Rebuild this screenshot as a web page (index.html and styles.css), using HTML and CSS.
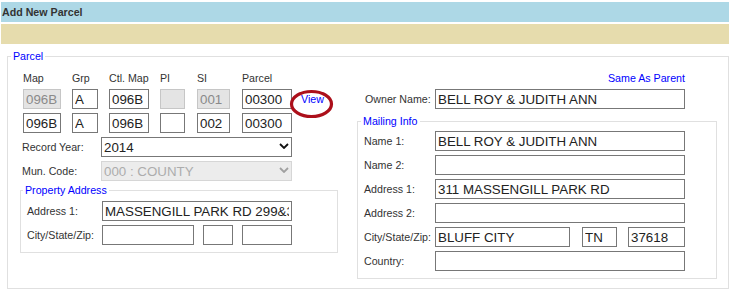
FILE: index.html
```html
<!DOCTYPE html>
<html>
  <head>
    <title>Add New Parcel</title>
    <link rel="stylesheet" href="styles.css">
  </head>
  <body>
    <div class="title-bar">Add New Parcel</div>
    <div class="tool-bar"></div>

    <fieldset class="parcel-box">
      <legend>Parcel</legend>
      <div class="columns">

        <div class="left-col">
          <div class="id-grid">
            <span>Map</span>
            <span>Grp</span>
            <span>Ctl. Map</span>
            <span>PI</span>
            <span>SI</span>
            <span>Parcel</span>
            <span></span>

            <input class="box w-map" type="text" value="096B" disabled>
            <input class="box w-grp" type="text" value="A">
            <input class="box w-ctl" type="text" value="096B">
            <input class="box w-pi" type="text" value="" disabled>
            <input class="box w-si" type="text" value="001" disabled>
            <input class="box w-parcel" type="text" value="00300">
            <span class="view-cell">
              <a class="view-link" href="#">View</a>
              <svg class="ring" width="45" height="30" viewBox="0 0 45 30">
                <ellipse cx="22.5" cy="15" rx="20" ry="12.5" fill="none" stroke="#ac0f1a" stroke-width="3.2"/>
              </svg>
            </span>

            <input class="box w-map" type="text" value="096B">
            <input class="box w-grp" type="text" value="A">
            <input class="box w-ctl" type="text" value="096B">
            <input class="box w-pi" type="text" value="">
            <input class="box w-si" type="text" value="002">
            <input class="box w-parcel" type="text" value="00300">
            <span></span>
          </div>

          <div class="field-row">
            <label class="lbl" for="year">Record Year:</label>
            <span class="select-wrap">
              <select class="box sel" id="year"><option>2014</option></select>
              <svg class="chev" width="10" height="6" viewBox="0 0 10 6">
                <polyline points="1,1 5,5 9,1" fill="none" stroke="#111" stroke-width="1.8"/>
              </svg>
            </span>
          </div>
          <div class="field-row">
            <label class="lbl" for="mun">Mun. Code:</label>
            <span class="select-wrap">
              <select class="box sel" id="mun" disabled><option>000 : COUNTY</option></select>
              <svg class="chev" width="10" height="6" viewBox="0 0 10 6">
                <polyline points="1,1 5,5 9,1" fill="none" stroke="#a0a0a0" stroke-width="1.8"/>
              </svg>
            </span>
          </div>

          <fieldset class="prop-box">
            <legend>Property Address</legend>
            <div class="field-row">
              <label class="lbl">Address 1:</label>
              <input class="box w-long" type="text" value="MASSENGILL PARK RD 299&amp;301">
            </div>
            <div class="field-row">
              <label class="lbl">City/State/Zip:</label>
              <input class="box w-city" type="text" value="">
              <input class="box w-state" type="text" value="">
              <input class="box w-zip" type="text" value="">
            </div>
          </fieldset>
        </div>

        <div class="right-col">
          <div class="same-row"><a href="#">Same As Parent</a></div>
          <div class="field-row owner-row">
            <label class="lbl">Owner Name:</label>
            <input class="box w-wide" type="text" value="BELL ROY &amp; JUDITH ANN">
          </div>

          <fieldset class="mail-box">
            <legend>Mailing Info</legend>
            <div class="field-row first">
              <label class="lbl">Name 1:</label>
              <input class="box w-wide" type="text" value="BELL ROY &amp; JUDITH ANN">
            </div>
            <div class="field-row">
              <label class="lbl">Name 2:</label>
              <input class="box w-wide" type="text" value="">
            </div>
            <div class="field-row">
              <label class="lbl">Address 1:</label>
              <input class="box w-wide" type="text" value="311 MASSENGILL PARK RD">
            </div>
            <div class="field-row">
              <label class="lbl">Address 2:</label>
              <input class="box w-wide" type="text" value="">
            </div>
            <div class="field-row">
              <label class="lbl">City/State/Zip:</label>
              <input class="box w-mcity" type="text" value="BLUFF CITY">
              <input class="box w-mstate" type="text" value="TN">
              <input class="box w-mzip" type="text" value="37618">
            </div>
            <div class="field-row">
              <label class="lbl">Country:</label>
              <input class="box w-wide" type="text" value="">
            </div>
          </fieldset>
        </div>

      </div>
    </fieldset>
  </body>
</html>
```

FILE: styles.css
```css
body {
  margin: 2px 0 0 1px;
  font-family: "Liberation Sans", Arial, sans-serif;
  font-size: 8pt;
  color: #333;
}

.title-bar {
  height: 20px;
  line-height: 20px;
  padding-left: 1px;
  background-color: #add8e6;
  font-weight: bold;
  color: #333;
}

.tool-bar {
  height: 20px;
  margin-top: 2px;
  background-color: #e6dcad;
}

fieldset {
  margin: 0;
  padding: 0;
  min-width: 0;
  border: 1px solid #e0e0e0;
}

legend {
  margin-left: 3px;
  padding: 0 2px;
  line-height: 14px;
  color: #0000ff;
}

.parcel-box {
  margin: 5px 0 0 6px;
  padding: 8px 0 9px 0;
}

.columns {
  display: flex;
  align-items: flex-start;
  gap: 19px;
  margin-left: 12px;
}

.left-col {
  width: 318px;
}

.right-col {
  width: 360px;
}

/* map / group / parcel ids */
.id-grid {
  display: grid;
  grid-template-columns: 49px 37px 51px 37px 45px 50px auto;
  row-gap: 4px;
  align-items: center;
  margin-left: 3px;
}

.id-grid span {
  line-height: 14px;
}

.box {
  box-sizing: border-box;
  height: 20px;
  margin: 0;
  padding: 0 2px;
  border: 1px solid #777;
  border-radius: 0;
  background-color: #fff;
  font-family: "Liberation Sans", Arial, sans-serif;
  font-size: 10pt;
  color: #222;
}

.box:disabled {
  background-color: #e4e4e4;
  border-color: #c6c6c6;
  color: #8a8a8a;
}

.w-map { width: 38px; }
.w-grp { width: 26px; }
.w-ctl { width: 40px; }
.w-pi { width: 25px; }
.w-si { width: 33px; }
.w-parcel { width: 50px; }

.view-cell {
  position: relative;
  margin-left: 9px;
}

.view-link {
  color: #0000ff;
  text-decoration: none;
}

.ring {
  position: absolute;
  left: -12px;
  top: -3px;
}

.field-row {
  display: flex;
  align-items: center;
  margin-top: 4px;
}

.left-col > .field-row .lbl {
  width: 79px;
  margin-left: 2px;
}

.select-wrap {
  position: relative;
  display: block;
}

.sel {
  width: 191px;
  appearance: none;
  -webkit-appearance: none;
  padding-left: 2px;
}

.chev {
  position: absolute;
  right: 3px;
  top: 6px;
}

/* property address */
.prop-box {
  margin-top: 2px;
  padding: 0 0 7px 0;
}

.prop-box legend {
  margin-left: 2px;
}

.prop-box .lbl {
  width: 75px;
  margin-left: 6px;
}

.w-long { width: 190px; }
.w-city { width: 92px; }
.w-state { width: 30px; margin-left: 9px; }
.w-zip { width: 50px; margin-left: 9px; }

/* owner / mailing */
.same-row {
  line-height: 14px;
  padding-right: 32px;
  text-align: right;
}

.same-row a {
  color: #0000ff;
  text-decoration: none;
}

.owner-row .lbl {
  width: 70px;
  margin-left: 8px;
}

.mail-box {
  margin-top: 5px;
  padding: 0 0 7px 0;
}

.mail-box .field-row.first {
  margin-top: 3px;
}

.mail-box .lbl {
  width: 71px;
  margin-left: 6px;
}

.w-wide { width: 250px; }
.w-mcity { width: 135px; }
.w-mstate { width: 35px; margin-left: 12px; }
.w-mzip { width: 57px; margin-left: 11px; }
```
